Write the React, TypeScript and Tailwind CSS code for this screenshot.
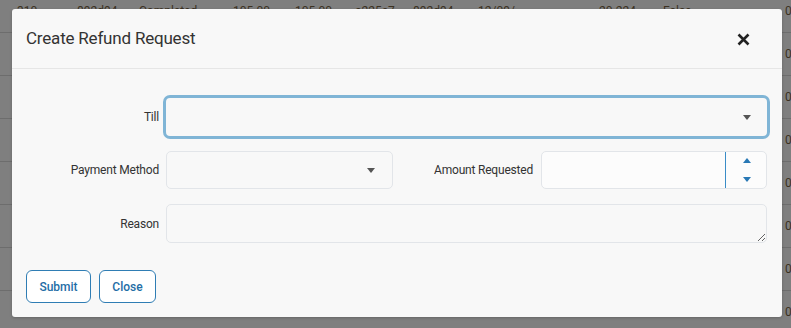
import React from "react";

const rows = [0, 1, 2, 3, 4, 5, 6, 7];

const Caret = ({ color = "#555" }: { color?: string }) => (
  <svg width="8" height="5" viewBox="0 0 8 5">
    <path d="M0 0 L8 0 L4 5 Z" fill={color} />
  </svg>
);

const App = () => {
  return (
    <div
      className="relative w-[791px] h-[328px] overflow-hidden bg-[#7f7f7f]"
      style={{ fontFamily: "Roboto, 'Liberation Sans', sans-serif" }}
    >
      {/* table behind the overlay */}
      <div className="flex flex-col -mt-[10px]">
        {rows.map((r) => (
          <div
            key={r}
            className="h-[43px] border-b border-[#6d6d6d] flex items-center text-[12px] text-[#3b3122] relative"
          >
            {r === 0 && (
              <>
                <span className="absolute left-[17px]">310</span>
                <span className="absolute left-[77px]">892d94</span>
                <span className="absolute left-[139px]">Completed</span>
                <span className="absolute left-[233px]">105.00</span>
                <span className="absolute left-[295px]">105.00</span>
                <span className="absolute left-[355px]">a225e7</span>
                <span className="absolute left-[413px]">892d94</span>
                <span className="absolute left-[478px]">12/09/</span>
                <span className="absolute left-[599px]">20.224</span>
                <span className="absolute left-[663px]">False</span>
              </>
            )}
            <span className="absolute left-[785px]">0</span>
          </div>
        ))}
      </div>

      {/* modal */}
      <div className="absolute left-[12px] top-[9px] w-[770px] h-[308px] bg-[#f8f8f8] rounded-[3px] flex flex-col shadow-[0_1px_3px_rgba(0,0,0,0.2)]">
        <div className="h-[60px] shrink-0 flex items-center justify-between pl-[14px] pr-[32px] border-b border-[#e6e6e6]">
          <h2 className="text-[17px] text-[#333] tracking-[-0.2px]">Create Refund Request</h2>
          <svg width="13" height="13" viewBox="0 0 13 13" className="mt-[1px]">
            <path d="M1.5 1.5 L11.5 11.5 M11.5 1.5 L1.5 11.5" stroke="#222" strokeWidth="2.6" strokeLinecap="butt" />
          </svg>
        </div>

        <div className="flex flex-col pl-[14px] pr-[15px] pt-[26px]">
          <div className="flex items-center">
            <label className="w-[133px] text-right text-[12px] tracking-[-0.2px] text-[#333]">Till</label>
            <div className="flex-1 h-[44px] ml-[4px] -mr-[3px] border-[3px] border-[#80b5d6] rounded-[7px] bg-[#f8f8f8] flex items-center justify-end pr-[16px]">
              <Caret />
            </div>
          </div>

          <div className="flex items-center gap-[7px] mt-[12px]">
            <label className="w-[133px] text-right text-[12px] tracking-[-0.2px] text-[#333]">Payment Method</label>
            <div className="flex-1 flex items-center">
              <div className="w-[227px] h-[38px] border border-[#e2e5e9] rounded-[5px] bg-[#f8f8f8] flex items-center justify-end pr-[17px]">
                <Caret />
              </div>
              <label className="flex-1 text-right text-[12px] tracking-[-0.2px] text-[#333] pr-[8px]">Amount Requested</label>
              <div className="w-[226px] h-[38px] border border-[#e2e5e9] rounded-[5px] bg-[#fcfcfc] flex">
                <div className="flex-1" />
                <div className="w-[41px] border-l border-[#3a8cc7] flex flex-col items-center justify-between py-[6px] pl-[1px]">
                  <svg width="8" height="5" viewBox="0 0 8 5">
                    <path d="M0 5 L8 5 L4 0 Z" fill="#2878b5" />
                  </svg>
                  <Caret color="#2878b5" />
                </div>
              </div>
            </div>
          </div>

          <div className="flex items-center gap-[7px] mt-[15px] h-[39px]">
            <label className="w-[133px] text-right text-[12px] tracking-[-0.2px] text-[#333]">Reason</label>
            <textarea className="flex-1 block h-[39px] border border-[#e2e5e9] rounded-[5px] bg-[#f8f8f8] outline-none resize-y" />
          </div>
        </div>

        <div className="flex gap-[8px] pl-[14px] mt-[27px]">
          <button className="w-[65px] h-[33px] border border-[#2f7db4] rounded-[6px] text-[12px] font-medium text-[#1f6ea6] bg-white">
            Submit
          </button>
          <button className="w-[57px] h-[33px] border border-[#2f7db4] rounded-[6px] text-[12px] font-medium text-[#1f6ea6] bg-white">
            Close
          </button>
        </div>
      </div>
    </div>
  );
};

export default App;
